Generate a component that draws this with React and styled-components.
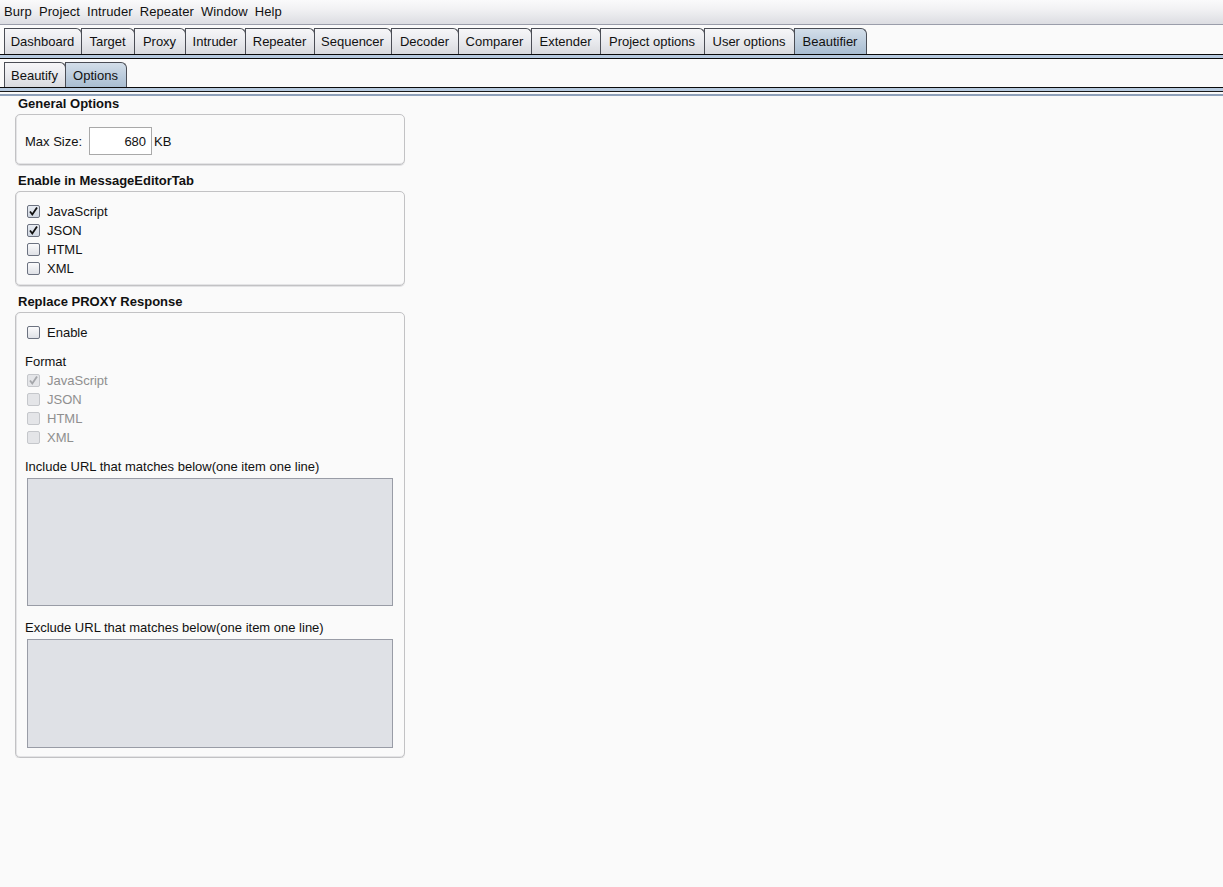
import React from "react";
import styled, { createGlobalStyle } from "styled-components";

const GlobalStyle = createGlobalStyle`
  html, body {
    margin: 0;
    padding: 0;
    background: #fafafa;
    font-family: "Liberation Sans", Arial, sans-serif;
    font-size: 13px;
    color: #111;
  }
`;

const MenuBar = styled.div`
  height: 24px;
  display: flex;
  align-items: center;
  padding-left: 4px;
  background: linear-gradient(#fafafb, #f1f1f3 40%, #dcdde2);
  border-bottom: 1px solid #9a9daa;
`;

const MenuItem = styled.span`
  margin-right: 7px;
  line-height: 20px;
  letter-spacing: 0.1px;
`;

const TabStrip = styled.div`
  display: flex;
  align-items: flex-end;
  padding: 3px 0 0 4px;
  height: ${(p) => (p.sub ? "25px" : "26px")};
  background: #fafafa;
`;

const Tab = styled.div`
  box-sizing: border-box;
  width: ${(p) => p.w + 1}px;
  height: ${(p) => (p.sub ? "25px" : "26px")};
  display: flex;
  align-items: center;
  justify-content: center;
  padding-right: 1px;
  border: 1px solid #4a4d55;
  border-bottom: none;
  margin-right: -1px;
  border-radius: 0 6px 0 0;
  background: ${(p) =>
    p.active
      ? "linear-gradient(#d3dee9, #b9cadb 60%, #a9bdd1)"
      : "linear-gradient(#f6f6f8, #e9eaee 50%, #d9dade)"};
  color: #111;
  white-space: nowrap;
`;

const TabRule = styled.div`
  height: 3px;
  background: #b7cadf;
  border-top: 1px solid #0a0a0a;
  border-bottom: 1px solid #0a0a0a;
`;

const SubRule = styled.div`
  height: 3px;
  background: #b7cadf;
  border-top: 1px solid #0a0a0a;
  border-bottom: 1px solid #1a1a1a;
  box-shadow: 0 2px 0 #fafafa, 0 4px 0 #8fa1ba;
  margin-bottom: 4px;
`;

const Content = styled.div`
  padding: 0 0 0 15px;
  width: 390px;
`;

const Heading = styled.div`
  font-weight: bold;
  line-height: 16px;
  padding-left: 3px;
  margin: ${(p) => (p.first ? "2px" : "8px")} 0 2px;
`;

const GroupBox = styled.div`
  border: 1px solid #c2c2c4;
  border-radius: 5px;
  box-shadow: inset 1px 0 0 #e4e4e6, inset 0 -1px 0 #e4e4e6, 0 1px 0 #e2e2e4;
  padding: ${(p) => p.pad || "11px 11px 7px 9px"};
  display: flex;
  flex-direction: column;
`;

const Row = styled.div`
  display: flex;
  align-items: center;
  height: 19px;
  color: ${(p) => (p.disabled ? "#8f8f8f" : "#111")};
`;

const InlineRow = styled.div`
  display: flex;
  align-items: center;
`;

const SizeInput = styled.div`
  width: 56px;
  height: 26px;
  border: 1px solid #a9a9a9;
  background: #fff;
  display: flex;
  align-items: center;
  justify-content: flex-end;
  padding-right: 5px;
  margin: 0 2px 0 7px;
`;

const Box = styled.span`
  width: 11px;
  height: 11px;
  margin: 0 7px 0 2px;
  border: 1px solid ${(p) => (p.disabled ? "#c5c7cb" : "#6c7280")};
  border-radius: 2px;
  background: ${(p) =>
    p.disabled
      ? "#e4e5e8"
      : p.checked
      ? "linear-gradient(#e9edf3, #cfd6e1)"
      : "linear-gradient(#fbfbfc, #dfe1e6)"};
  display: flex;
  align-items: center;
  justify-content: center;
`;

const Gap = styled.div`
  height: ${(p) => p.h}px;
`;

const Label = styled.div`
  line-height: 19px;
  height: 19px;
`;

const TextArea = styled.div`
  margin-left: 2px;
  width: 364px;
  height: ${(p) => p.h}px;
  border: 1px solid #999ca6;
  background: #dfe1e6;
`;

function CheckBox({ checked, disabled, label }) {
  return (
    <Row disabled={disabled}>
      <Box checked={checked} disabled={disabled}>
        {checked && (
          <svg width="11" height="11" viewBox="0 0 11 11">
            <path
              d="M2 5.5 L4.3 8.5 L9 1.5"
              fill="none"
              stroke={disabled ? "#a4a6aa" : "#111"}
              strokeWidth="1.8"
            />
          </svg>
        )}
      </Box>
      {label}
    </Row>
  );
}

const mainTabs = [
  ["Dashboard", 77],
  ["Target", 53],
  ["Proxy", 51],
  ["Intruder", 60],
  ["Repeater", 69],
  ["Sequencer", 77],
  ["Decoder", 67],
  ["Comparer", 73],
  ["Extender", 69],
  ["Project options", 104],
  ["User options", 90],
  ["Beautifier", 72],
];

export default function App() {
  return (
    <>
      <GlobalStyle />
      <MenuBar>
        {["Burp", "Project", "Intruder", "Repeater", "Window", "Help"].map((m) => (
          <MenuItem key={m}>{m}</MenuItem>
        ))}
      </MenuBar>
      <TabStrip>
        {mainTabs.map(([t, w]) => (
          <Tab key={t} w={w} active={t === "Beautifier"}>
            {t}
          </Tab>
        ))}
      </TabStrip>
      <TabRule />
      <TabStrip sub>
        <Tab sub w={61}>
          Beautify
        </Tab>
        <Tab sub w={61} active>
          Options
        </Tab>
      </TabStrip>
      <SubRule />
      <Content>
        <Heading first>General Options</Heading>
        <GroupBox pad="12px 11px 9px 9px">
          <InlineRow>
            <span>Max Size:</span>
            <SizeInput>680</SizeInput>
            <span>KB</span>
          </InlineRow>
        </GroupBox>

        <Heading>Enable in MessageEditorTab</Heading>
        <GroupBox pad="10px 11px 7px 9px">
          <CheckBox checked label="JavaScript" />
          <CheckBox checked label="JSON" />
          <CheckBox label="HTML" />
          <CheckBox label="XML" />
        </GroupBox>

        <Heading>Replace PROXY Response</Heading>
        <GroupBox pad="10px 11px 9px 9px">
          <CheckBox label="Enable" />
          <Gap h={10} />
          <Label>Format</Label>
          <CheckBox checked disabled label="JavaScript" />
          <CheckBox disabled label="JSON" />
          <CheckBox disabled label="HTML" />
          <CheckBox disabled label="XML" />
          <Gap h={10} />
          <Label>Include URL that matches below(one item one line)</Label>
          <Gap h={2} />
          <TextArea h={126} />
          <Gap h={12} />
          <Label>Exclude URL that matches below(one item one line)</Label>
          <Gap h={2} />
          <TextArea h={107} />
        </GroupBox>
      </Content>
    </>
  );
}
